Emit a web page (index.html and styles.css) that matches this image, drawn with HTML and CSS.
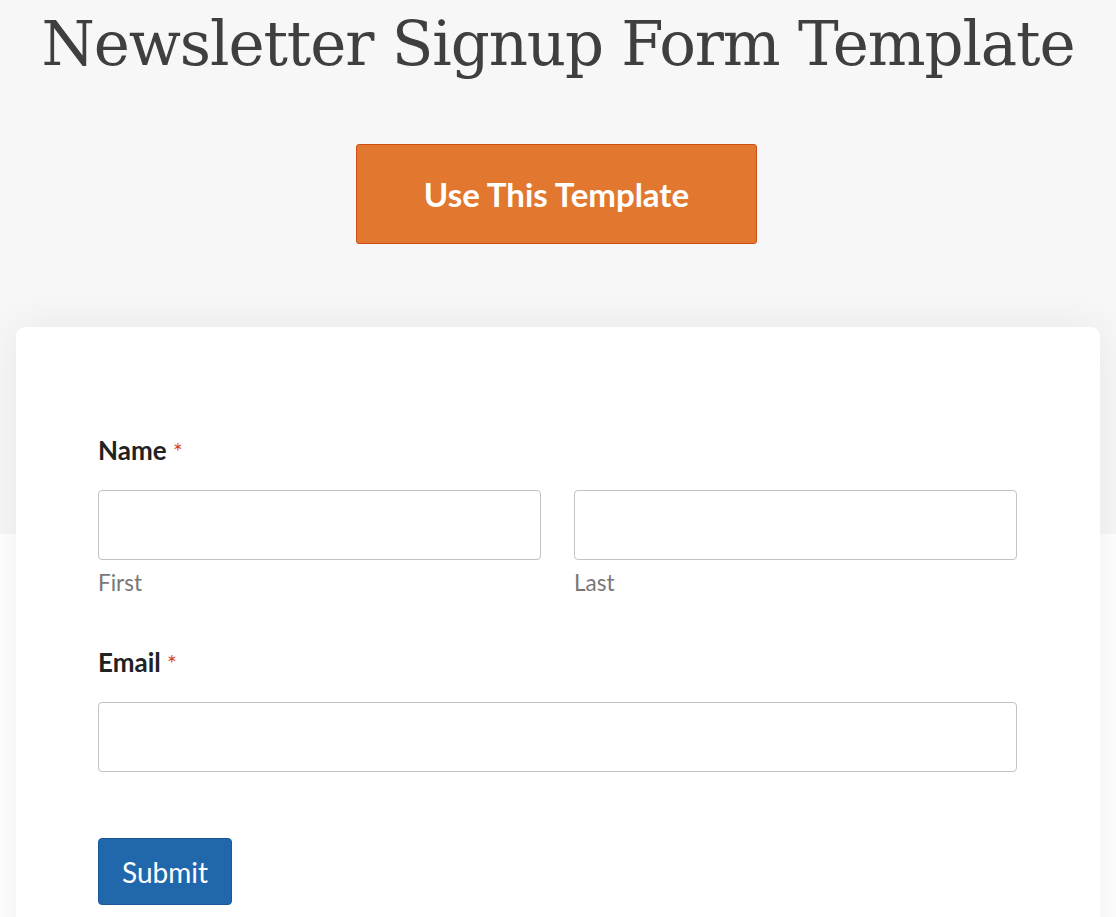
FILE: index.html
```html
<!DOCTYPE html>
<html lang="en">
<head>
<meta charset="utf-8">
<title>Newsletter Signup Form Template</title>
<link rel="stylesheet" href="styles.css">
</head>
<body>
  <header class="hero">
    <h1 class="hero-title">Newsletter Signup Form Template</h1>
    <a class="cta" href="#">Use This Template</a>
  </header>
  <main class="card">
    <form class="form">
      <div class="field">
        <div class="label">Name <span class="req">*</span></div>
        <div class="row">
          <div class="col">
            <input class="input" type="text">
            <div class="sublabel">First</div>
          </div>
          <div class="col">
            <input class="input" type="text">
            <div class="sublabel">Last</div>
          </div>
        </div>
      </div>
      <div class="field">
        <div class="label">Email <span class="req">*</span></div>
        <input class="input" type="email">
      </div>
      <button class="submit" type="button">Submit</button>
    </form>
  </main>
</body>
</html>
```
FILE: styles.css
```css
* { box-sizing: border-box; }
html, body { margin: 0; padding: 0; }
body {
  background: #ffffff;
  font-family: Lato, "Open Sans", sans-serif;
  color: #222;
  overflow: hidden;
}
.hero {
  background: #f7f7f7;
  height: 534px;
  padding-top: 6px;
  display: flex;
  flex-direction: column;
  align-items: center;
}
.hero-title {
  margin: 0;
  font-family: "DejaVu Serif", serif;
  font-weight: normal;
  font-size: 61px;
  letter-spacing: -1.1px;
  line-height: 76px;
  color: #3f3f3f;
  white-space: nowrap;
}
.cta {
  margin-top: 62px;
  margin-right: 3px;
  width: 401px;
  height: 100px;
  display: flex;
  align-items: center;
  justify-content: center;
  background: #e27730;
  border: 1px solid #cf4f17;
  border-radius: 3px;
  color: #fff;
  text-decoration: none;
  font-family: Lato, sans-serif;
  font-weight: bold;
  font-size: 33px;
}
.card {
  margin: -207px 16px 0;
  background: #fff;
  border-radius: 9px;
  box-shadow: 0 0 45px rgba(0, 0, 0, 0.07);
  padding: 108px 83px 200px 82px;
  position: relative;
}
.form { display: flex; flex-direction: column; }
.field { display: flex; flex-direction: column; }
.field + .field { margin-top: 51px; }
.label {
  font-size: 26px;
  line-height: 30px;
  font-weight: bold;
  color: #222;
  margin-bottom: 24px;
}
.req {
  color: #d8431c;
  font-weight: normal;
  font-size: 23px;
}
.row { display: flex; gap: 33px; }
.col { flex: 1; display: flex; flex-direction: column; }
.input {
  display: block;
  width: 100%;
  height: 70px;
  border: 1px solid #c2c2c2;
  border-radius: 4px;
  background: #fff;
  margin: 0;
}
.sublabel {
  margin-top: 10px;
  font-size: 22.5px;
  line-height: 26px;
  color: #777;
}
.submit {
  align-self: flex-start;
  margin-top: 66px;
  height: 67px;
  width: 134px;
  padding: 0;
  background: #2167ab;
  border: 1px solid #1b5a98;
  border-radius: 4px;
  color: #fff;
  font-family: Lato, sans-serif;
  font-size: 28px;
}
```
